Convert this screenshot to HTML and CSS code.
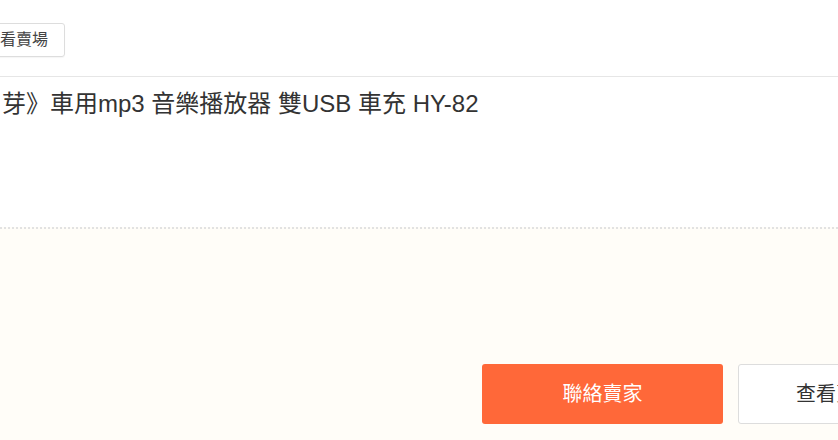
FILE: index.html
```html
<!DOCTYPE html>
<html lang="zh-Hant">
<head>
    <meta charset="UTF-8">
    <meta name="viewport" content="width=device-width, initial-scale=1.0">
    <title>商品</title>
    <link rel="stylesheet" href="styles.css">
</head>
<body>

<!-- 賣場列 -->
<div class="shop-bar">
    <a class="shop-btn" href="#">查看賣場</a>
</div>

<!-- 商品名稱 -->
<div class="item-title">
    <h1>芽》車用mp3 音樂播放器 雙USB 車充 HY-82</h1>
</div>

<!-- 操作按鈕 -->
<div class="item-actions">
    <a class="btn btn-primary" href="#">聯絡賣家</a>
    <a class="btn btn-default" href="#">查看賣場</a>
</div>

</body>
</html>
```

FILE: styles.css
```css
html, body {
    height: 100%;
}
body {
    margin: 0;
    font-family: "Liberation Sans", Arial, "Noto Sans CJK TC", sans-serif;
    color: #333;
    background-color: #fff;
    overflow: hidden;
    display: flex;
    flex-direction: column;
}
a {
    text-decoration: none;
    color: #333;
}

.shop-bar {
    height: 76px;
    border-bottom: 1px solid #e6e6e6;
    display: flex;
    align-items: flex-start;
    flex: none;
}
.shop-btn {
    margin: 23px 0 0 -33px;
    height: 32px;
    line-height: 32px;
    padding: 0 16px;
    font-size: 16px;
    border: 1px solid #ddd;
    border-radius: 3px;
    box-shadow: 0 1px 1px rgba(0, 0, 0, 0.04);
    color: #444;
}

.item-title {
    flex: none;
    height: 150px;
    padding: 11px 0 0 2px;
    box-sizing: border-box;
}
.item-title h1 {
    margin: 0;
    font-size: 24px;
    line-height: 32px;
    font-weight: normal;
    color: #333;
}

.item-actions {
    flex: 1;
    background-color: #fffdf8;
    border-top: 2px dotted #e2e2e2;
    display: flex;
    gap: 15px;
    padding: 135px 0 0 482px;
}
.btn {
    flex: none;
    height: 60px;
    line-height: 60px;
    text-align: center;
    font-size: 20px;
    border-radius: 3px;
    box-sizing: border-box;
}
.btn-primary {
    width: 241px;
    background-color: #ff6839;
    color: #fff;
}
.btn-default {
    width: 196px;
    background-color: #fff;
    border: 1px solid #ddd;
    line-height: 58px;
    color: #333;
}
```
